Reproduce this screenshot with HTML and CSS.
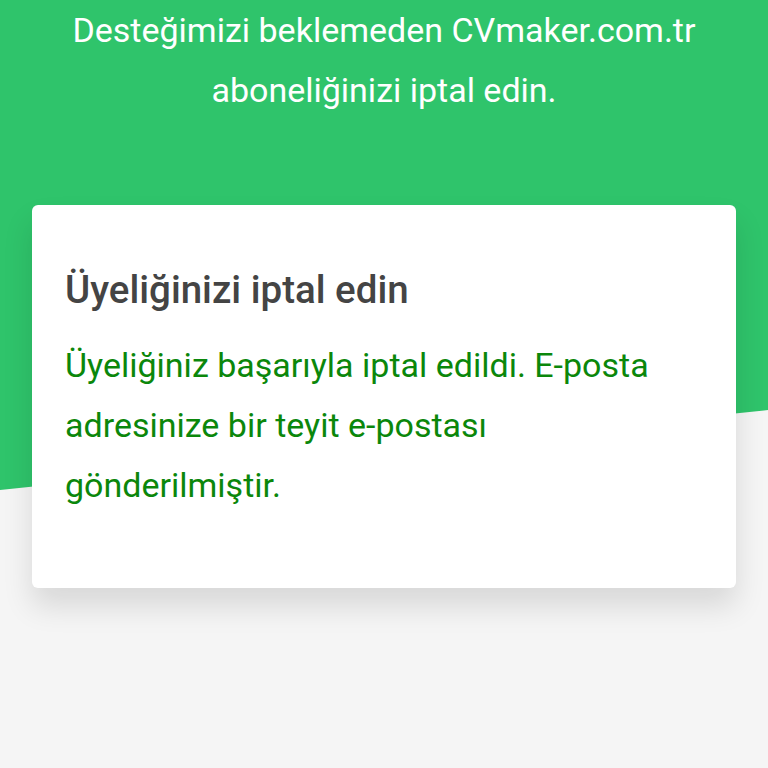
FILE: index.html
```html
<!DOCTYPE html>
<html>
<head>
    <meta name="viewport" content="width=device-width, initial-scale=1.0">
    <link rel="stylesheet" href="styles.css">
</head>
<body>
    <div class="hero">
        <p class="hero-text">Desteğimizi beklemeden CVmaker.com.tr aboneliğinizi iptal edin.</p>
    </div>

    <div class="card">
        <h2>Üyeliğinizi iptal edin</h2>
        <p class="success">Üyeliğiniz başarıyla iptal edildi. E-posta adresinize bir teyit e-postası gönderilmiştir.</p>
    </div>
</body>
</html>
```

FILE: styles.css
```css
body {
    margin: 0;
    padding-bottom: 180px;
    background-color: #f5f5f5;
    font-family: 'Roboto', 'Liberation Sans', sans-serif;
}

.hero {
    height: 490px;
    background-color: #2fc46b;
    clip-path: polygon(0 0, 100% 0, 100% 410px, 0 490px);
    padding: 0 50px;
    box-sizing: border-box;
}

.hero-text {
    margin: 0;
    color: #ffffff;
    font-size: 34px;
    line-height: 60px;
    text-align: center;
}

.card {
    margin: -285px 32px 0 32px;
    padding: 65px 33px 73px 33px;
    background-color: #ffffff;
    border-radius: 6px;
    box-shadow: 0 18px 30px rgba(0, 0, 0, 0.12);
    position: relative;
}

h2 {
    margin: 0;
    color: #444444;
    font-size: 38.5px;
    font-weight: 500;
    line-height: 40px;
}

.success {
    margin: 25px 0 0 0;
    color: #0b870b;
    font-size: 34px;
    line-height: 60px;
}
```
